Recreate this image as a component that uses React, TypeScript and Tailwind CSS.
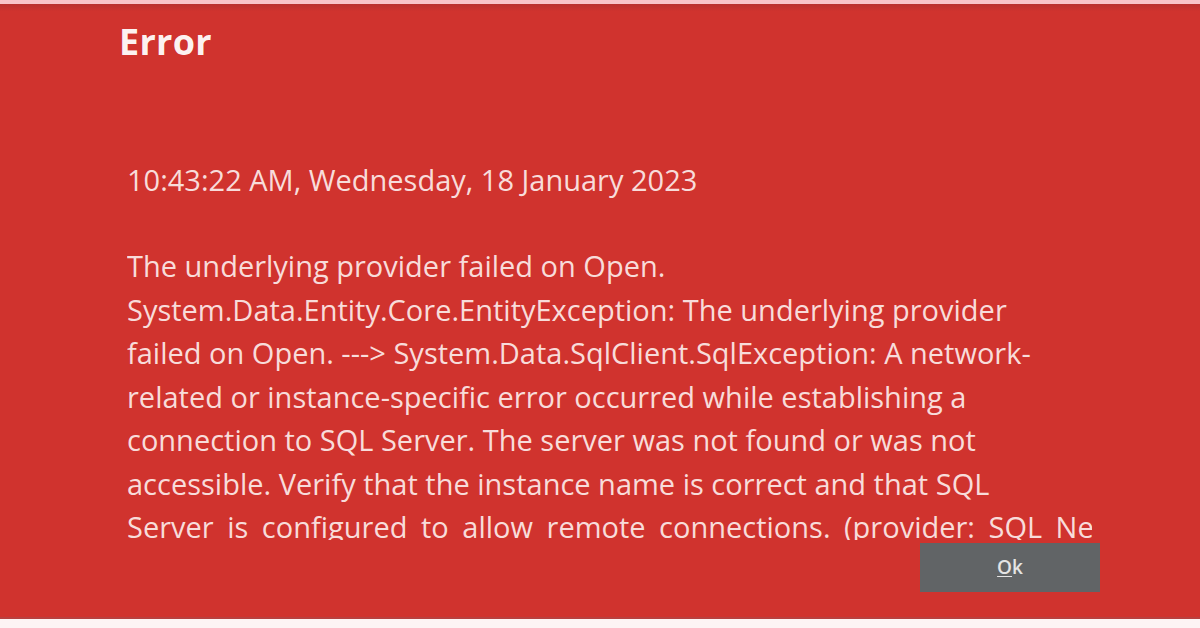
const lines = [
  "The underlying provider failed on Open.",
  "System.Data.Entity.Core.EntityException: The underlying provider",
  "failed on Open. ---> System.Data.SqlClient.SqlException: A network-",
  "related or instance-specific error occurred while establishing a",
  "connection to SQL Server. The server was not found or was not",
  "accessible. Verify that the instance name is correct and that SQL",
];

export default function App() {
  return (
    <div
      className="flex h-[628px] w-[1200px] flex-col overflow-hidden bg-[#fdf3f3]"
      style={{ fontFamily: '"Open Sans", "Noto Sans", sans-serif' }}
    >
      {/* top edge of the window behind */}
      <div className="h-[4px] bg-[#f9c3c8]" />

      {/* Error dialog */}
      <div className="flex flex-1 flex-col bg-[#d0332e] bg-gradient-to-b from-[#b9302e] from-0% via-[#d0332e] via-[1.2%] to-[#d0332e]">
        <h1 className="ml-[119px] mt-[18px] text-[36px] font-bold leading-[40px] tracking-[0.3px] text-white/95">
          Error
        </h1>

        <p className="ml-[127px] mt-[96px] whitespace-nowrap text-[29px] leading-[44px] text-[#f8dcda]">
          10:43:22 AM, Wednesday, 18 January 2023
        </p>

        {/* message box clips the rest of the exception text */}
        <div className="ml-[127px] mt-[42px] h-[296px] w-[965px] overflow-hidden text-[29px] leading-[43.5px] text-[#f8dcda]">
          {lines.map((line) => (
            <div key={line} className="whitespace-nowrap">
              {line}
            </div>
          ))}
          <div className="whitespace-nowrap [word-spacing:6px]">
            Server is configured to allow remote connections. (provider: SQL Network Interfaces, error: 26)
          </div>
        </div>

        <div className="mr-[100px] mt-[3px] flex justify-end">
          <button className="flex h-[49px] w-[180px] items-center justify-center bg-[#616466] text-[19px] font-semibold text-[#e4e4e4]">
            <span>
              <span className="underline underline-offset-2">O</span>k
            </span>
          </button>
        </div>
      </div>

      <div className="h-[11px] border-t-[2px] border-[#b8403f] bg-[#fdf4f4]" />
    </div>
  );
}
